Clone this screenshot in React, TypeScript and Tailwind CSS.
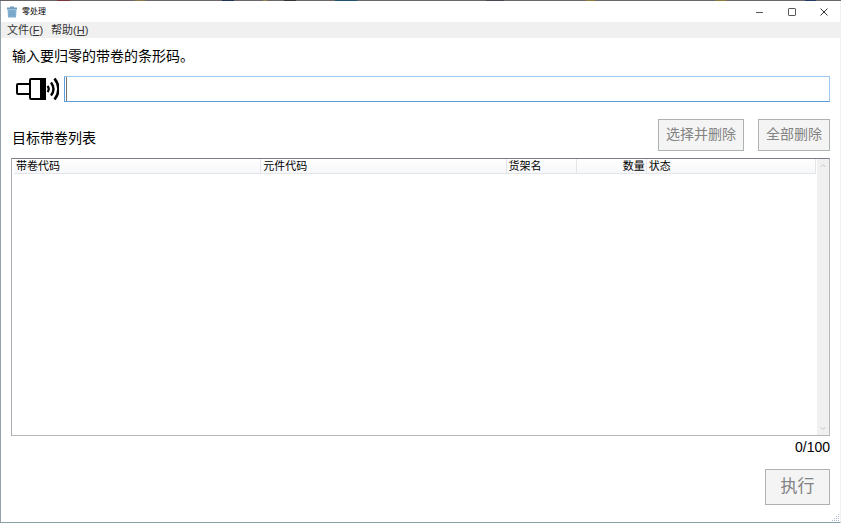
import { useState } from "react";

const columns = [
  { key: "reel", label: "带卷代码", width: "w-[30.8%]", align: "text-left" },
  { key: "part", label: "元件代码", width: "w-[30.6%]", align: "text-left" },
  { key: "rack", label: "货架名", width: "w-[8.8%]", align: "text-left" },
  { key: "qty", label: "数量", width: "w-[8.7%]", align: "text-right" },
  { key: "status", label: "状态", width: "", align: "text-left" },
];

// Desktop showing through above the window: share of the width, colour
const backdrop: [number, string][] = [
  [57, "bg-[#686465]"],
  [13, "bg-[#78323c]"],
  [65, "bg-[#6b6667]"],
  [10, "bg-[#8a7a4a]"],
  [77, "bg-[#6b6667]"],
  [12, "bg-[#203358]"],
  [29, "bg-[#6b6667]"],
  [4, "bg-[#92834f]"],
  [17, "bg-[#6b6667]"],
  [12, "bg-[#323238]"],
  [39, "bg-[#6b6667]"],
  [22, "bg-[#1e5370]"],
  [129, "bg-[#6b6667]"],
  [18, "bg-[#4a4650]"],
  [82, "bg-[#6b6667]"],
  [9, "bg-[#8a7a3c]"],
  [120, "bg-[#6b6667]"],
  [11, "bg-[#8a7a3c]"],
  [79, "bg-[#6b6667]"],
  [11, "bg-[#243b68]"],
  [25, "bg-[#6b6667]"],
];

function Backdrop() {
  return (
    <div className="flex h-px bg-[#6b6667]" aria-hidden="true">
      {backdrop.map(([share, color], i) => (
        <span key={i} className={color} style={{ flexGrow: share }} />
      ))}
    </div>
  );
}

function TrashIcon() {
  return (
    <svg className="h-3 w-3" viewBox="0 0 12 12" aria-hidden="true">
      <path d="M4 0.5h4v1h3v2H1v-2h3z" fill="#6f9dc0" />
      <path d="M1.5 3.5h9L10 11.5H2z" fill="#84b0d2" />
      <path d="M4 4.5v6M6 4.5v6M8 4.5v6" stroke="#6b9cc2" strokeWidth="0.8" />
    </svg>
  );
}

function ScannerIcon() {
  return (
    <svg className="h-6 w-12 shrink-0" viewBox="0 0 48 24" fill="none" stroke="#000" aria-hidden="true">
      <rect x="6" y="7" width="13" height="10" rx="1" strokeWidth="2" />
      <rect x="19" y="2" width="15" height="20" rx="1" fill="#fff" strokeWidth="2" />
      <path d="M29 1h6v22h-6z" fill="#000" stroke="none" />
      <path d="M36.500 9q2.500 3 0 6" strokeWidth="2.200" />
      <path d="M40 5.500q5 6.500 0 13" strokeWidth="2.400" />
      <path d="M43.500 1.500q8 10.500 0 21" strokeWidth="2.600" />
    </svg>
  );
}

function TitleBar() {
  return (
    <header className="flex h-[21px] items-center bg-white pl-[5px]">
      <TrashIcon />
      <h1 className="ml-1 text-[8px] leading-3">零处理</h1>
      <div className="ml-auto flex h-full">
        <button aria-label="最小化" className="flex w-8 items-center justify-center">
          <svg width="8" height="8" viewBox="0 0 8 8" stroke="#555">
            <path d="M0 4.500h7" />
          </svg>
        </button>
        <button aria-label="最大化" className="flex w-8 items-center justify-center">
          <svg width="8" height="8" viewBox="0 0 8 8" fill="none" stroke="#555">
            <rect x="0.500" y="0.500" width="7" height="7" rx="0.600" />
          </svg>
        </button>
        <button aria-label="关闭" className="flex w-8 items-center justify-center">
          <svg width="8" height="8" viewBox="0 0 8 8" stroke="#333">
            <path d="M0.500 0.500l7 7M7.500 0.500l-7 7" />
          </svg>
        </button>
      </div>
    </header>
  );
}

function DisabledButton({ children, className }: { children: string; className: string }) {
  return (
    <button disabled className={`border border-[#adb2b5] bg-[#f4f4f4] text-[#838383] ${className}`}>
      {children}
    </button>
  );
}

export default function App() {
  const [barcode, setBarcode] = useState("");

  return (
    <div className="flex min-h-screen flex-col bg-white font-['Liberation_Sans','Noto_Sans_CJK_SC',sans-serif] text-black">
      <Backdrop />
      <div className="flex flex-1 flex-col border-r border-b border-l border-r-[#f0f0f3] border-b-[#87a0a8] border-l-[#92a3ad]">
        <TitleBar />
        <nav className="flex h-4 items-center gap-2 bg-[#f0f0f0] pl-1.5 text-[11px] leading-4 text-[#333]">
          <button>
            文件(<u>F</u>)
          </button>
          <button>
            帮助(<u>H</u>)
          </button>
        </nav>

        <main className="relative flex flex-1 flex-col px-2.5 pt-2 pb-[17px]">
          <label htmlFor="barcode" className="pl-px text-sm leading-5">
            输入要归零的带卷的条形码。
          </label>
          <div className="mt-2.5 flex items-center">
            <div className="w-[53px]">
              <ScannerIcon />
            </div>
            <div className="relative flex-1">
              <input
                id="barcode"
                type="text"
                value={barcode}
                onChange={(e) => setBarcode(e.target.value)}
                className="peer block h-[26px] w-full border border-t-[#a0c8ee] border-r-[#a0c8ee] border-b-[#5a9bd8] border-l-[#5a9fe0] bg-white px-1 text-sm outline-none"
              />
              {barcode === "" && (
                <span className="absolute top-px bottom-px left-0.5 w-px bg-[#777] peer-focus:hidden" />
              )}
            </div>
          </div>

          <div className="mt-[17px] flex items-end">
            <h2 className="pb-[3px] pl-px text-sm leading-5">目标带卷列表</h2>
            <div className="ml-auto flex gap-3.5">
              <DisabledButton className="h-8 w-[86px] pb-0.5 text-sm">选择并删除</DisabledButton>
              <DisabledButton className="h-8 w-[72px] pb-0.5 text-sm">全部删除</DisabledButton>
            </div>
          </div>

          <div className="mt-[7px] flex flex-1 border border-t-[#7b8088] border-r-[#b5b9be] border-b-[#b5b9be] border-l-[#a8adb3]">
            <div className="flex-1 pr-px pl-0.5">
              <table className="w-full table-fixed border-collapse text-[11px] leading-[14px]">
                <thead>
                  <tr className="border-b border-[#e3e5e8] bg-linear-to-b from-white to-[#f7f8fa]">
                    {columns.map((col) => (
                      <th
                        key={col.key}
                        className={`border-r border-[#e3e5e8] p-0 pr-px pl-0.5 font-normal ${col.width} ${col.align}`}
                      >
                        {col.label}
                      </th>
                    ))}
                  </tr>
                </thead>
                <tbody />
              </table>
            </div>
            <div className="flex w-3 flex-col items-center justify-between bg-[#f0f0f0] py-1">
              <svg width="6" height="6" viewBox="0 0 6 6" fill="none" stroke="#c4c4c4">
                <path d="M0.500 4L3 1.500L5.500 4" />
              </svg>
              <svg width="6" height="6" viewBox="0 0 6 6" fill="none" stroke="#c4c4c4">
                <path d="M0.500 2L3 4.500L5.500 2" />
              </svg>
            </div>
          </div>

          <p className="mt-px text-right text-sm leading-5">0/100</p>
          <div className="mt-3 flex justify-end">
            <DisabledButton className="h-9 w-[65px] text-[17px]">执行</DisabledButton>
          </div>

          <svg className="absolute right-0 bottom-0 h-2 w-2" viewBox="0 0 8 8" fill="#aebccf" aria-hidden="true">
            <path d="M6 0h1v1h-1zM4 2h1v1h-1zM6 2h1v1h-1zM2 4h1v1h-1zM4 4h1v1h-1zM6 4h1v1h-1zM0 6h1v1h-1zM2 6h1v1h-1zM4 6h1v1h-1zM6 6h1v1h-1z" />
          </svg>
        </main>
      </div>
    </div>
  );
}
